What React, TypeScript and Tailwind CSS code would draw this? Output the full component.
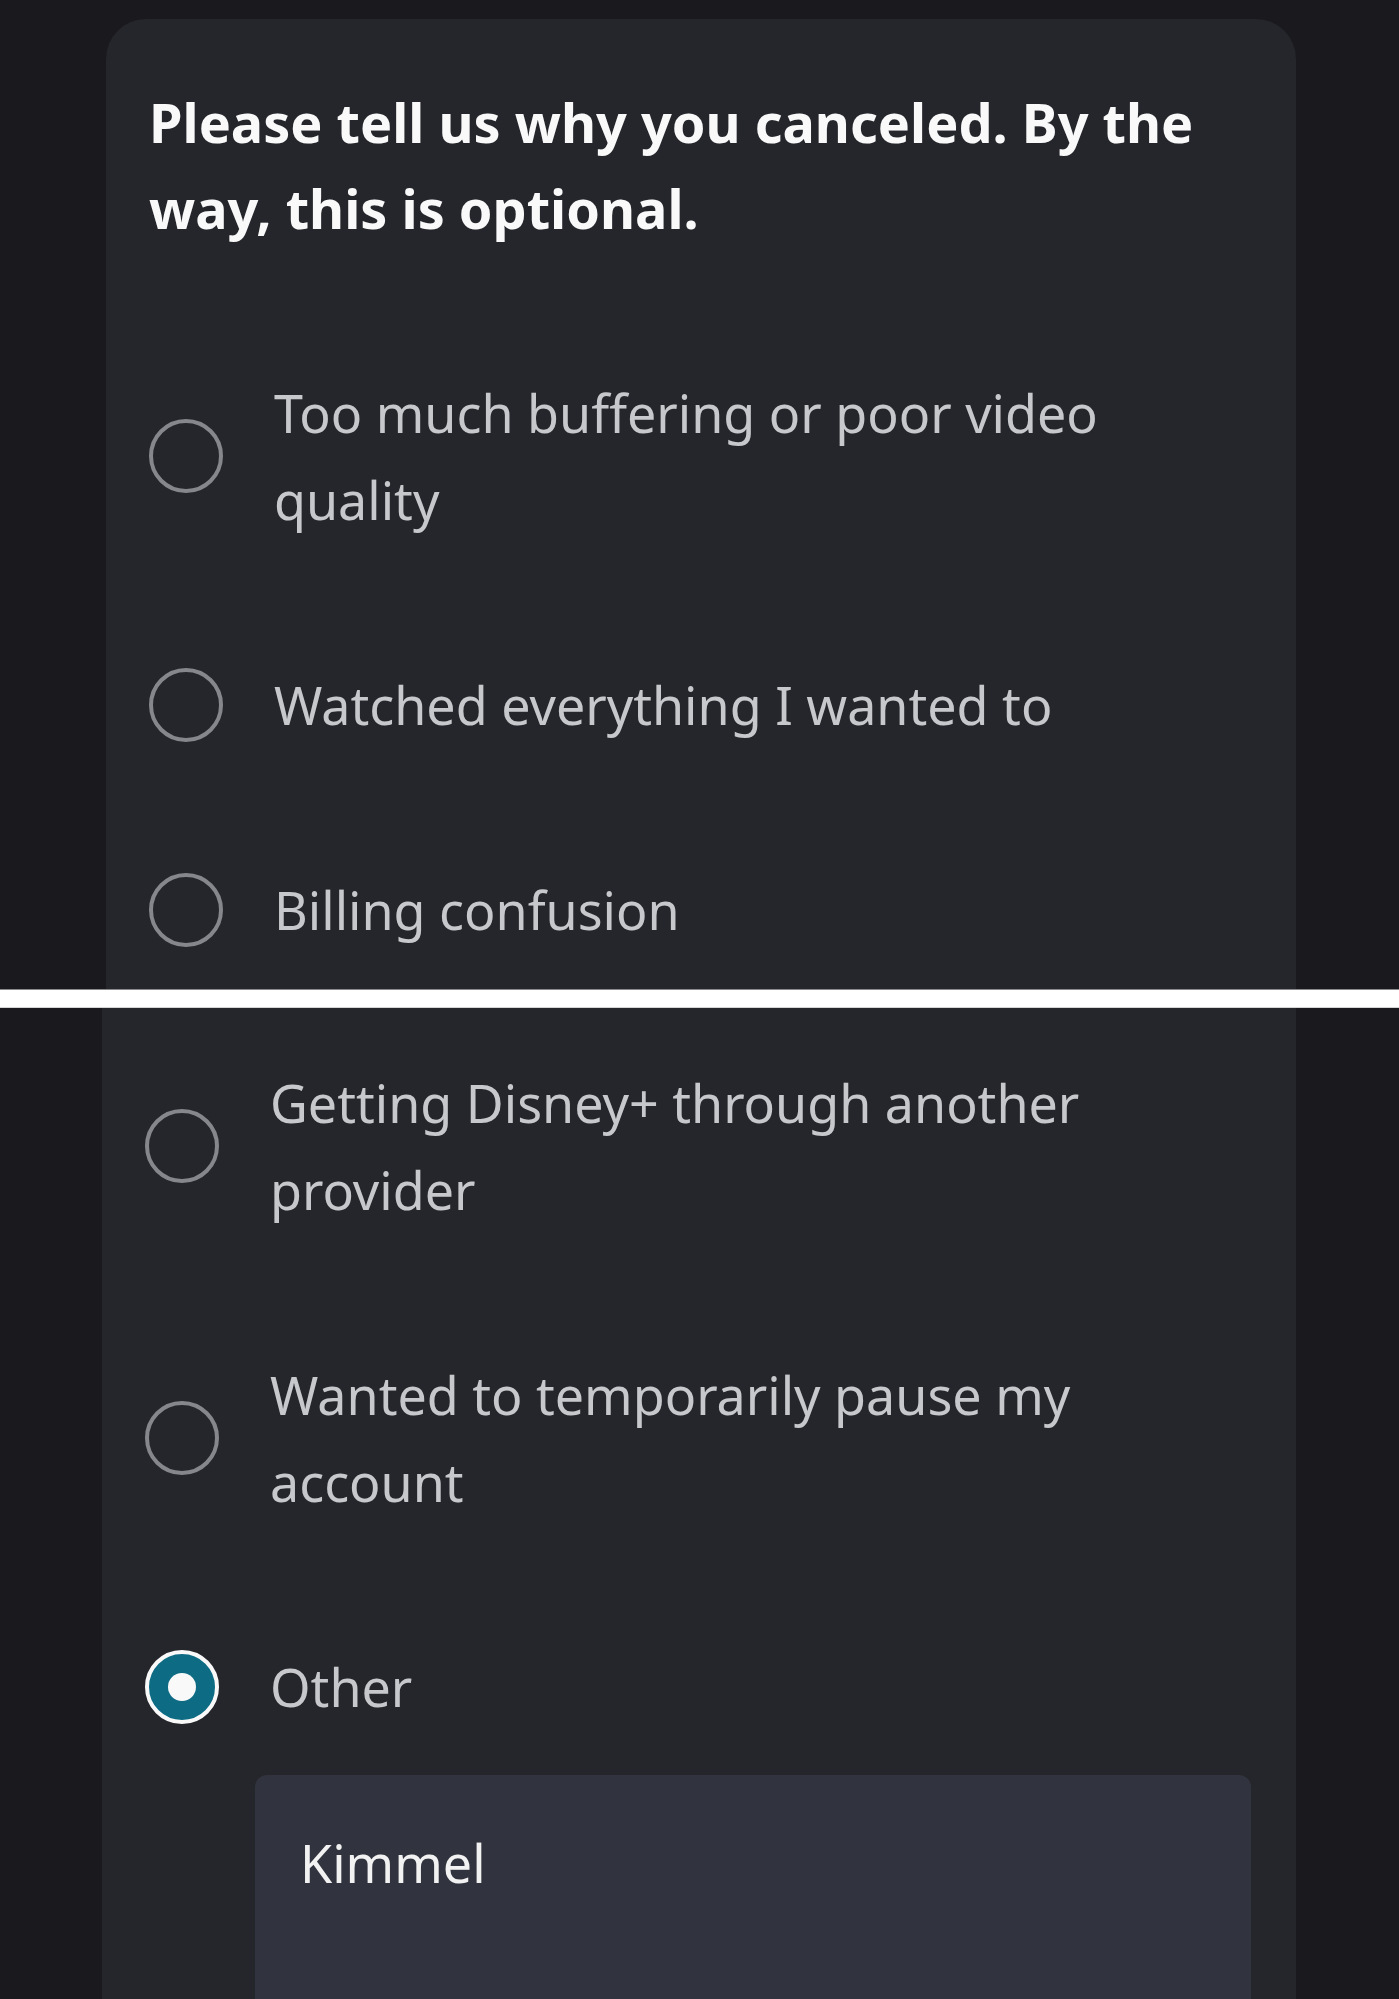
const font = { fontFamily: '"Noto Sans", Lato, sans-serif' };

const Radio = ({ checked }: { checked?: boolean }) =>
	checked ? (
		<span className="flex h-[74px] w-[74px] shrink-0 items-center justify-center rounded-full border-[4px] border-[#f9f9f9] bg-[#0d6b84]">
			<span className="h-[28px] w-[28px] rounded-full bg-[#f9f9f9]" />
		</span>
	) : (
		<span className="h-[74px] w-[74px] shrink-0 rounded-full border-[4px] border-[#86878c]" />
	);

const Option = ({ lines, checked }: { lines: string[]; checked?: boolean }) => (
	<div className="flex items-center gap-[51px]">
		<Radio checked={checked} />
		<div className="text-[52px] leading-[87px] text-[#c7c8cc]">
			{lines.map((l) => (
				<div key={l}>{l}</div>
			))}
		</div>
	</div>
);

export default function App() {
	return (
		<div className="flex w-[1399px] flex-col bg-[#1a1a1e]" style={font}>
			<div className="h-[989px] overflow-hidden pl-[106px] pr-[103px] pt-[19px]">
				<div className="h-full rounded-t-[40px] bg-[#25262b] pl-[43px] pt-[60px]">
					<h2 className="text-[54px] font-bold leading-[86px] text-[#f9f9f9]">
						Please tell us why you canceled. By the
						<br />
						way, this is optional.
					</h2>
					<div className="mt-[118px] flex flex-col gap-[118px]">
						<Option lines={['Too much buffering or poor video', 'quality']} />
						<Option lines={['Watched everything I wanted to']} />
						<Option lines={['Billing confusion']} />
					</div>
				</div>
			</div>
			<div className="h-[19px] border-t border-b border-t-[#8a8a8c] border-b-[#d4d4d6] bg-white" />
			<div className="h-[991px] overflow-hidden pl-[102px] pr-[103px]">
				<div className="h-full bg-[#25262b] pl-[43px] pt-[51px]">
					<div className="flex flex-col gap-[118px]">
						<Option lines={['Getting Disney+ through another', 'provider']} />
						<Option lines={['Wanted to temporarily pause my', 'account']} />
						<Option lines={['Other']} checked />
					</div>
					<div className="ml-[110px] mr-[45px] mt-[45px] h-[400px] rounded-t-[12px] bg-[#31343f] pl-[45px] pt-[44px]">
						<div className="text-[52px] leading-[87px] text-[#f2f2f2]">Kimmel</div>
					</div>
				</div>
			</div>
		</div>
	);
}
